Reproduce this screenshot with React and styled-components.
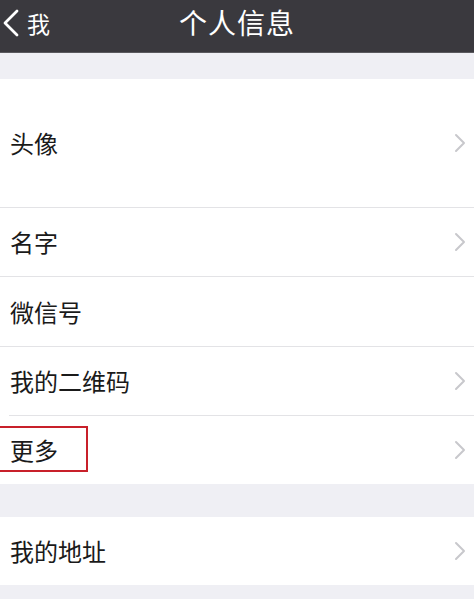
import styled, { createGlobalStyle } from "styled-components";

const GlobalStyle = createGlobalStyle`
  html, body {
    margin: 0;
    padding: 0;
    background: #efeff4;
  }
  body {
    font-family: "Noto Sans CJK SC", "Noto Sans", sans-serif;
  }
`;

const Page = styled.div`
  width: 474px;
  height: 599px;
  overflow: hidden;
  background: #efeff4;
  display: flex;
  flex-direction: column;
`;

const NavBar = styled.div`
  height: 52px;
  background: #3a393e;
  border-bottom: 1px solid #5a595e;
  position: relative;
  display: flex;
  align-items: center;
  justify-content: center;
  color: #ffffff;
  flex-shrink: 0;
`;

const BackButton = styled.div`
  position: absolute;
  left: 3px;
  top: 0;
  bottom: 6px;
  display: flex;
  align-items: center;
  gap: 8px;
  font-size: 23px;
`;

const Title = styled.div`
  font-size: 28px;
  letter-spacing: 1px;
  margin-bottom: 8px;
`;

const Gap = styled.div`
  height: ${(p) => p.h}px;
  flex-shrink: 0;
`;

const Group = styled.div`
  background: #ffffff;
  display: flex;
  flex-direction: column;
  flex-shrink: 0;
`;

const Row = styled.div`
  box-sizing: border-box;
  height: ${(p) => p.h}px;
  display: flex;
  align-items: center;
  justify-content: space-between;
  padding: 0 8px 0 10px;
  position: relative;
  flex-shrink: 0;
  & + & {
    border-top: 1px solid #e3e3e6;
  }
  & + &::before {
    content: "";
    position: absolute;
    left: 0;
    top: -1px;
    width: 9px;
    height: 1px;
    background: #ffffff;
  }
`;

const Label = styled.span`
  font-size: 24px;
  line-height: 1;
  color: #1a1a1a;
  position: relative;
`;

const Highlight = styled.span`
  position: absolute;
  left: -12px;
  right: -30px;
  top: -12px;
  bottom: -10px;
  border: 2px solid #c8202a;
`;

const Chevron = () => (
  <svg width="12" height="20" viewBox="0 0 12 20">
    <path d="M2 2 L10 10 L2 18" fill="none" stroke="#c8c8cc" strokeWidth="2" strokeLinecap="round" strokeLinejoin="round" />
  </svg>
);

const rows1 = [
  { label: "头像", h: 128 },
  { label: "名字", h: 69 },
  { label: "微信号", h: 70, noArrow: true },
  { label: "我的二维码", h: 69 },
  { label: "更多", h: 69, mark: true },
];

const App = () => (
  <Page>
    <GlobalStyle />
    <NavBar>
      <BackButton>
        <svg width="16" height="28" viewBox="0 0 16 28">
          <path d="M14 2 L2 14 L14 26" fill="none" stroke="#ffffff" strokeWidth="2.8" strokeLinecap="round" strokeLinejoin="round" />
        </svg>
        我
      </BackButton>
      <Title>个人信息</Title>
    </NavBar>
    <Gap h={26} />
    <Group>
      {rows1.map((r) => (
        <Row key={r.label} h={r.h}>
          <Label>
            {r.mark && <Highlight />}
            {r.label}
          </Label>
          {!r.noArrow && <Chevron />}
        </Row>
      ))}
    </Group>
    <Gap h={33} />
    <Group>
      <Row h={68}>
        <Label>我的地址</Label>
        <Chevron />
      </Row>
    </Group>
  </Page>
);

export default App;
